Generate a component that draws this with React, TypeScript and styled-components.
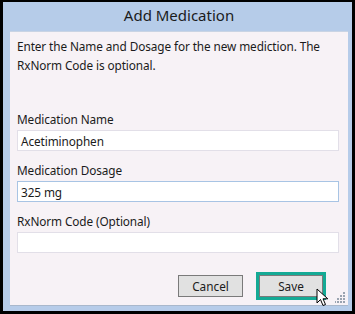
import React from 'react'
import styled, { createGlobalStyle } from 'styled-components'

const FRAME = '#b6cce9'
const PANEL = '#f7f2f6'
const INK = '#1b1b1b'

const GlobalStyle = createGlobalStyle`
  html, body {
    margin: 0;
    padding: 0;
    background: #000;
  }
  body {
    font-family: 'Noto Sans', 'Open Sans', sans-serif;
  }
`

const Window = styled.div`
  width: 355px;
  height: 314px;
  box-sizing: border-box;
  background: #000;
  padding: 2px 3px 3px 3px;
  display: flex;
`

const Frame = styled.div`
  flex: 1;
  background: ${FRAME};
  display: flex;
  flex-direction: column;
  padding: 0 4px 5px 7px;
`

const TitleBar = styled.div`
  height: 29px;
  box-sizing: border-box;
  padding-bottom: 3px;
  display: flex;
  align-items: center;
  justify-content: center;
  font-size: 15px;
  color: ${INK};
`

const Panel = styled.div`
  flex: 1;
  position: relative;
  background: ${PANEL};
  border-top: 1px solid #c9d4e4;
  border-bottom: 1px solid #a9b8cc;
  padding: 5px 9px 0 7px;
  display: flex;
  flex-direction: column;
  color: ${INK};
  font-size: 11.8px;
  letter-spacing: -0.1px;
`

const Intro = styled.p`
  margin: 0;
  line-height: 19px;
  height: 74px;
`

const Label = styled.div`
  line-height: 17px;
  margin-bottom: 2px;
`

const Field = styled.div<{ $focused?: boolean }>`
  height: 21px;
  box-sizing: border-box;
  background: #fff;
  border: 1px solid ${(p) => (p.$focused ? '#a8c4e4' : '#e2dfe8')};
  padding: 0 3px;
  display: flex;
  align-items: center;
  margin-bottom: 11px;
`

const Footer = styled.div`
  margin-top: auto;
  display: flex;
  justify-content: flex-end;
  align-items: center;
  gap: 13px;
  padding: 0 13px 5px 0;
`

const Button = styled.button`
  width: 65px;
  height: 22px;
  box-sizing: border-box;
  background: #e1e1e1;
  border: 1px solid #7a7a7a;
  font-family: inherit;
  font-size: 11.8px;
  color: ${INK};
  padding: 0;
`

const FocusRing = styled.div`
  border: 3px solid #14aa95;
  display: flex;
`

const SaveButton = styled(Button)`
  width: 64px;
  height: 22px;
`

const Cursor = styled.svg`
  position: absolute;
  left: 306px;
  top: 256px;
`

const Grip = styled.svg`
  position: absolute;
  right: 2px;
  bottom: 2px;
`

export default function App() {
  return (
    <>
      <GlobalStyle />
      <Window>
        <Frame>
          <TitleBar>Add Medication</TitleBar>
          <Panel>
            <Intro>
              Enter the Name and Dosage for the new mediction. The RxNorm Code is
              optional.
            </Intro>
            <Label>Medication Name</Label>
            <Field>Acetiminophen</Field>
            <Label>Medication Dosage</Label>
            <Field $focused>325 mg</Field>
            <Label>RxNorm Code (Optional)</Label>
            <Field />
            <Footer>
              <Button>Cancel</Button>
              <FocusRing>
                <SaveButton>Save</SaveButton>
              </FocusRing>
            </Footer>
            <Cursor width="14" height="20" viewBox="0 0 14 20">
              <path
                d="M1 1 L1 15 L4.5 11.5 L7 17.5 L9.5 16.5 L7 10.8 L11.8 10.8 Z"
                fill="#fff"
                stroke="#000"
                strokeWidth="1"
                strokeLinejoin="miter"
              />
            </Cursor>
            <Grip width="11" height="11" viewBox="0 0 11 11">
              <g fill="#9aa3b0">
                <rect x="8" y="0" width="2" height="2" />
                <rect x="5" y="3" width="2" height="2" />
                <rect x="8" y="3" width="2" height="2" />
                <rect x="2" y="6" width="2" height="2" />
                <rect x="5" y="6" width="2" height="2" />
                <rect x="8" y="6" width="2" height="2" />
                <rect x="-1" y="9" width="2" height="2" />
                <rect x="2" y="9" width="2" height="2" />
                <rect x="5" y="9" width="2" height="2" />
                <rect x="8" y="9" width="2" height="2" />
              </g>
            </Grip>
          </Panel>
        </Frame>
      </Window>
    </>
  )
}
